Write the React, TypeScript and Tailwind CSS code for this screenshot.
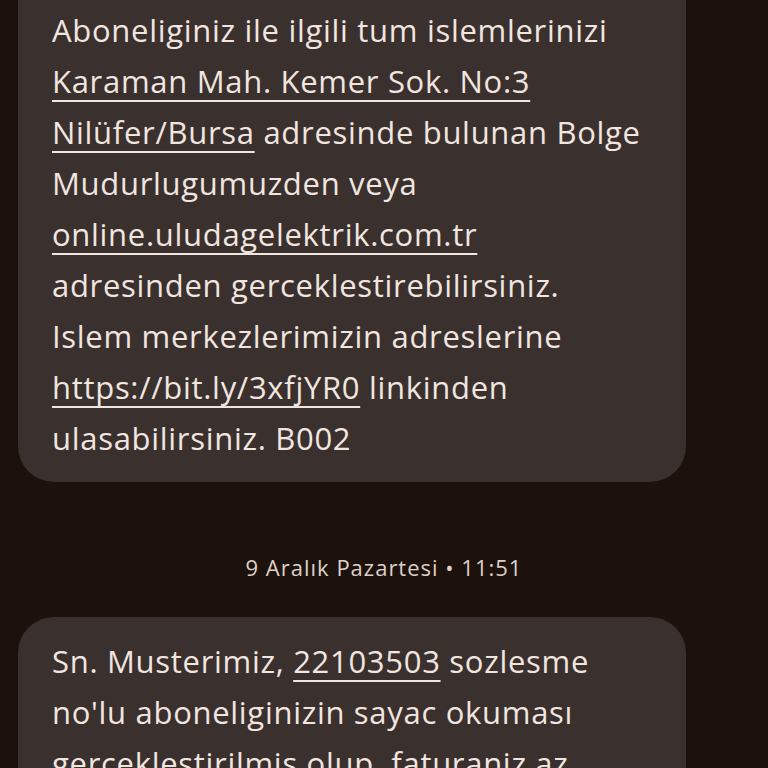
const u = "underline decoration-2 underline-offset-[7px]";

function App() {
    return (
        <div className="w-[768px] h-[768px] overflow-hidden bg-[#1d120b] text-[#f1e5e0] font-['Open_Sans',sans-serif]">
            <div className="ml-[18px] w-[668px] bg-[#3a302d] rounded-b-[36px] pl-[34px] pr-[10px] pt-[5px] pb-[18px] text-[31px] tracking-[0.7px] leading-[51px] whitespace-nowrap">
                <div>Aboneliginiz ile ilgili tum islemlerinizi</div>
                <div><span className={u}>Karaman Mah. Kemer Sok. No:3</span></div>
                <div><span className={u}>Nilüfer/Bursa</span> adresinde bulunan Bolge</div>
                <div>Mudurlugumuzden veya</div>
                <div><span className={u}>online.uludagelektrik.com.tr</span></div>
                <div>adresinden gerceklestirebilirsiniz.</div>
                <div>Islem merkezlerimizin adreslerine</div>
                <div><span className={u}>https://bit.ly/3xfjYR0</span> linkinden</div>
                <div>ulasabilirsiniz. B002</div>
            </div>
            <div className="h-[135px] pt-[70px] text-center text-[22px] leading-[30px] tracking-[1px] text-[#ddd0ca]">
                9 Aralık Pazartesi • 11:51
            </div>
            <div className="ml-[18px] w-[668px] bg-[#3a302d] rounded-[36px] pl-[34px] pr-[10px] pt-[19px] pb-[18px] text-[31px] tracking-[0.7px] leading-[51px] whitespace-nowrap">
                <div>Sn. Musterimiz, <span className={u}>22103503</span> sozlesme</div>
                <div>no'lu aboneliginizin sayac okuması</div>
                <div>gerceklestirilmis olup, faturaniz az</div>
            </div>
        </div>
    );
}

export default App;
